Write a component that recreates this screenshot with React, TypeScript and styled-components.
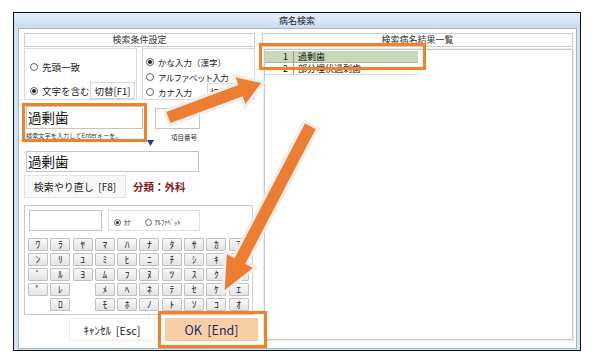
import React from 'react'
import styled, { createGlobalStyle } from 'styled-components'

const GlobalStyle = createGlobalStyle`
  html, body {
    margin: 0;
    padding: 0;
    background: #fff;
  }
  body {
    font-family: "Noto Sans CJK JP", "Noto Sans", sans-serif;
    color: #222;
  }
  * {
    box-sizing: border-box;
  }
`

const Page = styled.div`
  position: relative;
  width: 593px;
  height: 361px;
  padding: 12px 0 0 13px;
  overflow: hidden;
`

const Window = styled.div`
  width: 568px;
  height: 339px;
  border: 1px solid #111;
  background: #d3e2f2;
  display: flex;
  flex-direction: column;
`

const TitleBar = styled.div`
  height: 15px;
  background: linear-gradient(#e6eff9, #cadcf0);
  font-size: 9px;
  line-height: 15px;
  text-align: center;
  color: #222;
`

const Frame = styled.div`
  flex: 1;
  display: flex;
  padding: 0 3px 1px 4px;
`

const Client = styled.div`
  flex: 1;
  display: flex;
  gap: 4px;
  background: #fff;
  border: 1px solid #a9b5c2;
  padding: 4px 2px 0 5px;
`

const LeftCol = styled.div`
  width: 234px;
  display: flex;
  flex-direction: column;
`

const RightCol = styled.div`
  flex: 1;
  display: flex;
  flex-direction: column;
`

const SectionHeader = styled.div<{ $width: number }>`
  width: ${p => p.$width}px;
  height: 14px;
  border: 1px solid #cdcdcd;
  font-size: 9px;
  line-height: 12px;
  text-align: center;
  color: #333;
`

const OptionsRow = styled.div`
  display: flex;
  gap: 5px;
  margin-top: 1px;
  height: 52px;
`

const OptionBox = styled.div<{ $top?: number }>`
  width: 113px;
  height: 52px;
  border: 1px solid #dadada;
  display: flex;
  flex-direction: column;
  justify-content: ${p => (p.$top ? 'flex-start' : 'flex-end')};
  padding: ${p => p.$top || 0}px 0 0 ${p => (p.$top ? 3 : 5)}px;
  font-size: ${p => (p.$top ? 8.5 : 9.5)}px;
`

const RadioLine = styled.div<{ $gap?: number; $tight?: boolean }>`
  display: flex;
  align-items: center;
  height: 12px;
  line-height: 12px;
  white-space: nowrap;
  letter-spacing: ${p => (p.$tight ? '-0.7px' : 'normal')};
  margin-bottom: ${p => p.$gap || 0}px;
`

const ButtonLine = styled.div`
  display: flex;
  align-items: center;
  height: 17px;
  white-space: nowrap;
`

const RadioMark = styled.span<{ $on?: boolean; $small?: boolean }>`
  width: ${p => (p.$small ? 7 : 8)}px;
  height: ${p => (p.$small ? 7 : 8)}px;
  border: 1px solid #666;
  border-radius: 50%;
  background: #fff;
  display: inline-flex;
  align-items: center;
  justify-content: center;
  margin-right: ${p => (p.$small ? 3 : 4)}px;
  flex-shrink: 0;

  &::after {
    content: '';
    width: ${p => (p.$small ? 3 : 4)}px;
    height: ${p => (p.$small ? 3 : 4)}px;
    border-radius: 50%;
    background: ${p => (p.$on ? '#222' : 'transparent')};
  }
`

const SwitchButton = styled.div<{ $width: number; $right: number }>`
  width: ${p => p.$width}px;
  height: 17px;
  margin-left: auto;
  margin-right: ${p => p.$right}px;
  border: 1px solid #d6d6d6;
  background: #fcfcfc;
  font-size: 9.5px;
  letter-spacing: normal;
  display: flex;
  align-items: center;
  justify-content: center;
`

const SearchRow = styled.div`
  display: flex;
  align-items: flex-start;
  margin-top: 6px;
  height: 40px;
`

const InputCol = styled.div`
  width: 117px;
  margin-left: 2px;
`

const TextBox = styled.div<{ $width: number; $height: number }>`
  width: ${p => p.$width}px;
  height: ${p => p.$height}px;
  border: 1px solid #c4c4c4;
  background: #fff;
  font-size: 13.5px;
  line-height: ${p => p.$height - 2}px;
  padding-left: 1px;
  color: #111;
`

const Hint = styled.div`
  margin-top: 2px;
  font-size: 6.2px;
  line-height: 9px;
  white-space: nowrap;
  color: #333;
`

const Marker = styled.svg`
  margin: 34px 1px 0 4px;
`

const NumberCol = styled.div`
  margin-top: 2px;
  width: 45px;
`

const NumberLabel = styled.div`
  margin-top: 4px;
  font-size: 6.5px;
  line-height: 9px;
  text-align: right;
  padding-right: 3px;
  white-space: nowrap;
  color: #333;
`

const SecondInput = styled(TextBox)`
  margin: 5px 0 0 2px;
`

const ActionRow = styled.div`
  display: flex;
  align-items: center;
  margin-top: 3px;
`

const RedoButton = styled.div`
  width: 102px;
  height: 23px;
  border: 1px solid #e3e3e3;
  background: #f8f8f8;
  font-size: 10px;
  display: flex;
  align-items: center;
  justify-content: center;
  white-space: pre;
  color: #222;
`

const Category = styled.div`
  margin-left: 7px;
  font-size: 10.5px;
  font-weight: bold;
  color: #8a1b1b;
  white-space: nowrap;
`

const KeyBox = styled.div`
  margin-top: 7px;
  width: 229px;
  height: 110px;
  border: 1px solid #cbcbcb;
  padding: 4px 0 0 3px;
`

const KeyTop = styled.div`
  display: flex;
  gap: 6px;
`

const KanaInput = styled.div`
  margin-left: 1px;
  width: 73px;
  height: 21px;
  border: 1px solid #c4c4c4;
`

const ModeGroup = styled.div`
  width: 92px;
  height: 21px;
  border: 1px solid #e0e0e0;
  display: flex;
  align-items: flex-end;
  padding: 0 0 4px 5px;
  gap: 14px;
`

const ModeOption = styled.span`
  display: flex;
  align-items: center;
  font-size: 6.5px;
  line-height: 8px;
  white-space: nowrap;
`

const KeyGrid = styled.div`
  margin-top: 7px;
  display: grid;
  grid-template-columns: repeat(10, 20px);
  grid-auto-rows: 13px;
  column-gap: 2.3px;
  row-gap: 2px;
`

const Key = styled.div<{ $blank?: boolean }>`
  border: 1px solid ${p => (p.$blank ? 'transparent' : '#c2c2c2')};
  background: ${p => (p.$blank ? 'transparent' : 'linear-gradient(#f8f8f8, #e4e4e4)')};
  border-radius: 1px;
  font-size: 9.5px;
  line-height: 11px;
  text-align: center;
  color: #222;
`

const BottomRow = styled.div`
  display: flex;
  gap: 10px;
  margin-top: 3px;
  padding-left: 45px;
`

const DialogButton = styled.div<{ $primary?: boolean }>`
  width: ${p => (p.$primary ? 93 : 86)}px;
  height: 23px;
  border: 1px solid ${p => (p.$primary ? '#f6c89c' : '#ececec')};
  background: ${p => (p.$primary ? '#f9cfa8' : '#fff')};
  color: ${p => (p.$primary ? '#1d2a6c' : '#222')};
  font-size: ${p => (p.$primary ? 12.5 : 11)}px;
  display: flex;
  align-items: center;
  justify-content: center;
  white-space: pre;
`

const ListBox = styled.div`
  margin: 2px 1px 0 2px;
  height: 291px;
  border: 1px solid #c8c8c8;
  box-shadow: 0 0 0 1px #ececec;
  padding-top: 1px;
`

const ResultRow = styled.div<{ $selected?: boolean }>`
  width: 153px;
  height: 12px;
  display: flex;
  background: ${p => (p.$selected ? '#c9d9b8' : '#fff')};
  border-bottom: 1px solid ${p => (p.$selected ? '#a9b79b' : '#d8d8d8')};
  font-size: 9px;
  line-height: 11px;
  color: #111;
`

const NumCell = styled.span`
  width: 29px;
  text-align: right;
  padding-right: 5px;
  border-right: 1px solid #9c9c9c;
`

const NameCell = styled.span`
  padding-left: 4px;
  white-space: nowrap;
`

const Overlay = styled.svg`
  position: absolute;
  left: 0;
  top: 0;
  pointer-events: none;
`

const KEYS = [
  ['ﾜ', 'ﾗ', 'ﾔ', 'ﾏ', 'ﾊ', 'ﾅ', 'ﾀ', 'ｻ', 'ｶ', 'ｱ'],
  ['ﾝ', 'ﾘ', 'ﾕ', 'ﾐ', 'ﾋ', 'ﾆ', 'ﾁ', 'ｼ', 'ｷ', 'ｲ'],
  ['ﾞ', 'ﾙ', 'ﾖ', 'ﾑ', 'ﾌ', 'ﾇ', 'ﾂ', 'ｽ', 'ｸ', 'ｳ'],
  ['ﾟ', 'ﾚ', '', 'ﾒ', 'ﾍ', 'ﾈ', 'ﾃ', 'ｾ', 'ｹ', 'ｴ'],
  ['', 'ﾛ', '', 'ﾓ', 'ﾎ', 'ﾉ', 'ﾄ', 'ｿ', 'ｺ', 'ｵ'],
]

const RESULTS = [
  { no: 1, name: '過剰歯' },
  { no: 2, name: '部分埋伏過剰歯' },
]

const Arrow: React.FC<{ x: number; y: number; angle: number; length: number; head: number }> = ({
  x,
  y,
  angle,
  length,
  head,
}) => {
  const base = length - head
  const points = `0,-7.5 ${base},-7.5 ${base},-17 ${length},0 ${base},17 ${base},7.5 0,7.5`
  return (
    <g transform={`translate(${x},${y}) rotate(${angle})`}>
      <polygon points={points} fill='#ed7d31' stroke='#eeeeee' strokeWidth={3} strokeLinejoin='miter' />
    </g>
  )
}

const App: React.FC = () => {
  return (
    <Page>
      <GlobalStyle />
      <Window>
        <TitleBar>病名検索</TitleBar>
        <Frame>
          <Client>
            <LeftCol>
              <SectionHeader $width={231}>検索条件設定</SectionHeader>
              <OptionsRow>
                <OptionBox>
                  <RadioLine $gap={9}>
                    <RadioMark />
                    先頭一致
                  </RadioLine>
                  <ButtonLine>
                    <RadioMark $on />
                    文字を含む
                    <SwitchButton $width={45} $right={1}>
                      切替[F1]
                    </SwitchButton>
                  </ButtonLine>
                </OptionBox>
                <OptionBox $top={7}>
                  <RadioLine $gap={3}>
                    <RadioMark $on />
                    かな入力（漢字）
                  </RadioLine>
                  <RadioLine $tight>
                    <RadioMark />
                    アルファベット入力
                  </RadioLine>
                  <ButtonLine>
                    <RadioMark />
                    カナ入力
                    <SwitchButton $width={43} $right={4}>
                      切替[F2]
                    </SwitchButton>
                  </ButtonLine>
                </OptionBox>
              </OptionsRow>

              <SearchRow>
                <InputCol>
                  <TextBox $width={117} $height={23}>
                    過剰歯
                  </TextBox>
                  <Hint>検索文字を入力してEnterキーを。</Hint>
                </InputCol>
                <Marker width='7' height='6' viewBox='0 0 7 6'>
                  <polygon points='0,0 7,0 3.5,6' fill='#1f3b87' />
                </Marker>
                <NumberCol>
                  <TextBox $width={45} $height={21} />
                  <NumberLabel>項目番号</NumberLabel>
                </NumberCol>
              </SearchRow>

              <SecondInput $width={173} $height={21}>
                過剰歯
              </SecondInput>

              <ActionRow>
                <RedoButton>{'検索やり直し  [F8]'}</RedoButton>
                <Category>分類：外科</Category>
              </ActionRow>

              <KeyBox>
                <KeyTop>
                  <KanaInput />
                  <ModeGroup>
                    <ModeOption>
                      <RadioMark $on $small />
                      ｶﾅ
                    </ModeOption>
                    <ModeOption>
                      <RadioMark $small />
                      ｱﾙﾌｧﾍﾞｯﾄ
                    </ModeOption>
                  </ModeGroup>
                </KeyTop>
                <KeyGrid>
                  {KEYS.flat().map((k, i) => (
                    <Key key={i} $blank={k === ''}>
                      {k}
                    </Key>
                  ))}
                </KeyGrid>
              </KeyBox>

              <BottomRow>
                <DialogButton>{'ｷｬﾝｾﾙ  [Esc]'}</DialogButton>
                <DialogButton $primary>{'OK  [End]'}</DialogButton>
              </BottomRow>
            </LeftCol>

            <RightCol>
              <SectionHeader $width={311}>検索病名結果一覧</SectionHeader>
              <ListBox>
                {RESULTS.map((r, i) => (
                  <ResultRow key={r.no} $selected={i === 0}>
                    <NumCell>{r.no}</NumCell>
                    <NameCell>{r.name}</NameCell>
                  </ResultRow>
                ))}
              </ListBox>
            </RightCol>
          </Client>
        </Frame>
      </Window>

      <Overlay width='593' height='361' viewBox='0 0 593 361'>
        <g fill='none' stroke='#f58025' strokeWidth={3}>
          <rect x={23.5} y={104.5} width={122} height={36} />
          <rect x={260.5} y={44.5} width={164} height={24} />
          <rect x={159.5} y={312.5} width={106} height={34} />
        </g>
        <Arrow x={167} y={118} angle={-20.4} length={103} head={26} />
        <Arrow x={311} y={125} angle={117.6} length={190} head={38} />
      </Overlay>
    </Page>
  )
}

export default App
